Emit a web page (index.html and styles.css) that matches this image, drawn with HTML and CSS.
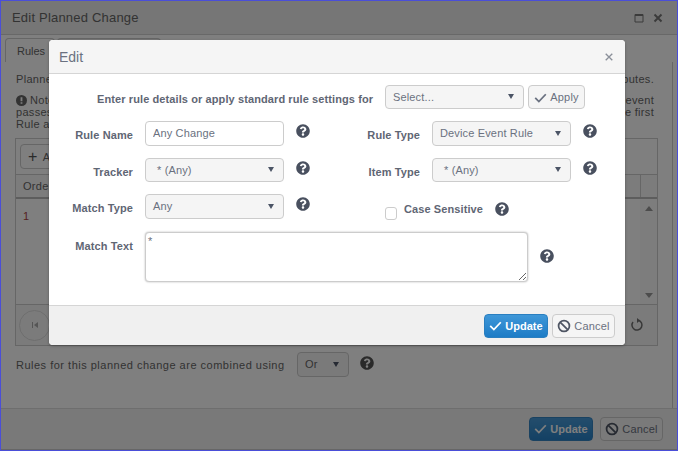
FILE: index.html
```html
<!DOCTYPE html>
<html lang="en">
<head>
    <meta charset="UTF-8">
    <title>Edit Planned Change</title>
    <link rel="stylesheet" href="styles.css">
</head>
<body>

<svg class="icon-defs" width="0" height="0">
    <symbol id="i-help" viewBox="0 0 512 512">
        <path d="M504 256c0 136.997-111.043 248-248 248S8 392.997 8 256C8 119.083 119.043 8 256 8s248 111.083 248 248zM262.655 90c-54.497 0-89.255 22.957-116.549 63.758-3.536 5.286-2.353 12.415 2.715 16.258l34.699 26.31c5.205 3.947 12.621 3.008 16.665-2.122 17.864-22.658 30.113-35.797 57.303-35.797 20.429 0 45.698 13.148 45.698 32.958 0 14.976-12.363 22.667-32.534 33.976C247.128 238.528 216 254.941 216 296v4c0 6.627 5.373 12 12 12h56c6.627 0 12-5.373 12-12v-1.333c0-28.462 83.186-29.647 83.186-106.667 0-58.002-60.165-102-116.531-102zM256 338c-25.365 0-46 20.635-46 46 0 25.364 20.635 46 46 46s46-20.636 46-46c0-25.365-20.635-46-46-46z"/>
    </symbol>
    <symbol id="i-check" viewBox="0 0 16 16">
        <path d="M1.5 8.5 6 13 14.5 4" fill="none" stroke="currentColor" stroke-width="2.2"/>
    </symbol>
    <symbol id="i-ban" viewBox="0 0 16 16">
        <circle cx="8" cy="8" r="6.2" fill="none" stroke="#4f5664" stroke-width="2"/>
        <path d="M3.8 3.8 12.2 12.2" stroke="#4f5664" stroke-width="2"/>
    </symbol>
</svg>

<!-- window behind the dialog -->
<div class="window">
    <div class="window-head">
        <span class="window-title">Edit Planned Change</span>
        <span class="window-tools">
            <svg width="10" height="10" viewBox="0 0 10 10"><path d="M1 1.5h8v7.5H1z" fill="none" stroke="currentColor"/><path d="M1 2h8" stroke="currentColor" stroke-width="2"/></svg>
            <svg width="10" height="10" viewBox="0 0 10 10"><path d="M1.5 1.5l7 7M8.5 1.5l-7 7" stroke="currentColor" stroke-width="2"/></svg>
        </span>
    </div>

    <div class="window-main">
        <div class="tabs">
            <div class="tab tab-active">Rules</div>
            <div class="tab tab-other"></div>
        </div>
        <div class="tab-panel">
            <div class="intro-line"><span>Planned</span><span>attributes.</span></div>
            <div class="note">
                <div class="intro-line"><span class="note-start"><svg width="11" height="11" viewBox="0 0 12 12"><circle cx="6" cy="6" r="6" fill="currentColor"/><path d="M6 2.5v4.2M6 8v1.6" stroke="#fff" stroke-width="2"/></svg>Note</span><span>event</span></div>
                <div class="intro-line"><span>passes</span><span>the first</span></div>
                <div class="intro-line"><span>Rule and</span></div>
            </div>

            <div class="grid-box">
                <div class="grid-toolbar"><span class="add-btn"><span class="add-plus">+</span> Add</span></div>
                <div class="grid-head"><span class="col-order">Order</span><span class="col-fill"></span><span class="col-scroll"></span></div>
                <div class="grid-body">
                    <div class="grid-cell">1</div>
                    <div class="scrollbar">
                        <span class="tri-up"></span>
                        <span class="tri-down"></span>
                    </div>
                </div>
                <div class="grid-pager">
                    <span class="pager-first"><svg width="8" height="8" viewBox="0 0 8 8"><path d="M1 1h1v6H1zM7 1v6L3 4z" fill="currentColor"/></svg></span>
                    <svg class="pager-refresh" width="14" height="14" viewBox="0 0 14 14"><path d="M8.5 2.3A5 5 0 1 1 3 4" fill="none" stroke="currentColor" stroke-width="1.5"/><path d="M7 0v5l3-2.5z" fill="currentColor"/></svg>
                </div>
            </div>

            <div class="combine-row">
                <span class="combine-text">Rules for this planned change are combined using</span>
                <span class="select select-small">Or</span>
                <svg class="help" width="14" height="14"><use href="#i-help"/></svg>
            </div>
        </div>
    </div>

    <div class="window-foot">
        <span class="btn btn-primary btn-update"><svg width="13" height="13"><use href="#i-check"/></svg>Update</span>
        <span class="btn btn-cancel"><svg width="14" height="14"><use href="#i-ban"/></svg>Cancel</span>
    </div>
</div>

<div class="backdrop"></div>

<!-- Edit dialog -->
<div class="modal">
    <div class="modal-head">
        <span class="modal-title">Edit</span>
        <svg class="modal-close" width="8" height="8" viewBox="0 0 9 9"><path d="M.8.8l7.4 7.4M8.2.8.8 8.2" stroke="currentColor" stroke-width="1.5"/></svg>
    </div>

    <form class="modal-body">
        <div class="apply-row">
            <label>Enter rule details or apply standard rule settings for</label>
            <span class="select select-apply">Select...</span>
            <span class="btn btn-apply"><svg width="13" height="13"><use href="#i-check"/></svg>Apply</span>
        </div>

        <div class="rule-grid">
            <label>Rule Name</label>
            <input class="field" type="text" value="Any Change">
            <svg class="help" width="14" height="14"><use href="#i-help"/></svg>
            <label>Rule Type</label>
            <span class="select">Device Event Rule</span>
            <svg class="help" width="14" height="14"><use href="#i-help"/></svg>

            <label>Tracker</label>
            <span class="select select-any">* (Any)</span>
            <svg class="help" width="14" height="14"><use href="#i-help"/></svg>
            <label>Item Type</label>
            <span class="select select-any">* (Any)</span>
            <svg class="help" width="14" height="14"><use href="#i-help"/></svg>

            <label>Match Type</label>
            <span class="select">Any</span>
            <svg class="help" width="14" height="14"><use href="#i-help"/></svg>
            <div class="case-cell">
                <span class="checkbox"></span>
                <label class="case-label">Case Sensitive</label>
                <svg class="help" width="14" height="14"><use href="#i-help"/></svg>
            </div>
        </div>

        <div class="text-row">
            <label>Match Text</label>
            <textarea class="field match-text">*</textarea>
            <svg class="help" width="14" height="14"><use href="#i-help"/></svg>
        </div>
    </form>

    <div class="modal-foot">
        <span class="btn btn-primary btn-update"><svg width="13" height="13"><use href="#i-check"/></svg>Update</span>
        <span class="btn btn-cancel"><svg width="14" height="14"><use href="#i-ban"/></svg>Cancel</span>
    </div>
</div>

</body>
</html>
```

FILE: styles.css
```css
* {
    box-sizing: border-box;
}
html, body {
    height: 100%;
}
body {
    margin: 0;
    overflow: hidden;
    font-family: "Liberation Sans", Arial, sans-serif;
    font-size: 11px;
    letter-spacing: 0.3px;
    color: #4c5566;
    background-color: #fff;
}
.icon-defs {
    position: absolute;
}
svg {
    flex: none;
    display: block;
}
.help {
    fill: #49505f;
}

/* window behind the dialog */
.window {
    height: 451px;
    display: flex;
    flex-direction: column;
    border: 1px solid #4a4ed8;
    color: #666;
    background-color: #fff;
}
.window-head {
    height: 34px;
    flex: none;
    display: flex;
    align-items: center;
    justify-content: space-between;
    padding: 0 14px 0 11px;
    background-color: #ececec;
    border-bottom: 1px solid #d0d0d0;
}
.window-title {
    font-size: 13px;
    letter-spacing: 0.2px;
}
.window-tools {
    display: flex;
    gap: 9px;
    color: #777;
}
.window-main {
    height: 373px;
    flex: none;
    margin-left: 3px;
    margin-right: 4px;
    padding-top: 3px;
}
.tabs {
    display: flex;
    gap: 2px;
    height: 24px;
    padding-left: 1px;
}
.tab {
    border: 1px solid #ccc;
    border-bottom: none;
    border-radius: 4px 4px 0 0;
    padding: 6px 11px 0;
    letter-spacing: 0;
}
.tab-active {
    width: 50px;
    background-color: #fff;
}
.tab-other {
    width: 104px;
    background-color: #f0f0f0;
}
.tab-panel {
    height: 346px;
    padding: 11px 14px 0 12px;
    background-color: #fff;
    border-right: 1px solid #ccc;
}
.intro-line {
    display: flex;
    justify-content: space-between;
    line-height: 12px;
    padding-right: 4px;
}
.note {
    margin-top: 9px;
}
.note-start {
    display: flex;
    align-items: center;
    gap: 3px;
}
.grid-box {
    margin: 8px 0 0 -1px;
    height: 208px;
    display: flex;
    flex-direction: column;
    border: 1px solid #ccc;
}
.grid-toolbar {
    height: 36px;
    flex: none;
    padding: 5px 4px;
    border-bottom: 1px solid #ccc;
}
.add-btn {
    display: flex;
    align-items: center;
    gap: 5px;
    width: 60px;
    height: 25px;
    padding: 0 7px;
    border: 1px solid #ccc;
    border-radius: 4px;
}
.add-plus {
    font-size: 16px;
    color: #555;
}
.grid-head {
    height: 24px;
    flex: none;
    display: flex;
    align-items: center;
    background-color: #f8f8f8;
    border-bottom: 2px solid #bbb;
}
.col-order {
    padding-left: 7px;
    width: 60px;
}
.col-fill {
    flex: 1;
    align-self: stretch;
}
.col-scroll {
    width: 17px;
    align-self: stretch;
    border-left: 1px solid #ccc;
}
.grid-body {
    flex: 1;
    min-height: 0;
    display: flex;
    justify-content: space-between;
    border-bottom: 1px solid #ccc;
}
.grid-cell {
    padding: 11px 7px;
    color: #a44;
}
.scrollbar {
    width: 17px;
    display: flex;
    flex-direction: column;
    justify-content: space-between;
    align-items: center;
    padding: 7px 0 6px;
    background-color: #fafafa;
}
.tri-up, .tri-down {
    width: 0;
    height: 0;
    border-left: 4px solid transparent;
    border-right: 4px solid transparent;
}
.tri-up {
    border-bottom: 5px solid #999;
}
.tri-down {
    border-top: 5px solid #999;
}
.grid-pager {
    flex: none;
    height: 40px;
    display: flex;
    align-items: center;
    justify-content: space-between;
    padding: 0 13px 0 3px;
    background-color: #f6f6f6;
}
.pager-first {
    width: 31px;
    height: 31px;
    border: 1px solid #ddd;
    border-radius: 50%;
    display: flex;
    align-items: center;
    justify-content: center;
    color: #aaa;
}
.pager-refresh {
    color: #707070;
}
.combine-row {
    margin-top: 6px;
    display: flex;
    align-items: center;
    height: 25px;
}
.combine-text {
    width: 281px;
    letter-spacing: 0.5px;
    white-space: nowrap;
}
.combine-row .select-small {
    width: 52px;
    height: 25px;
    color: #666;
}
.combine-row .help {
    margin: -3px 0 0 11px;
    fill: #555;
}
.window-foot {
    flex: 1;
    display: flex;
    justify-content: flex-end;
    align-items: center;
    gap: 7px;
    padding: 0 14px 1px 0;
    background-color: #f2f2f2;
    border-top: 1px solid #ddd;
    border-bottom: 1px solid #ccc;
}
.window-foot .btn-primary {
    opacity: 0.95;
}

.backdrop {
    position: absolute;
    inset: 1px;
    background-color: rgba(0, 0, 0, 0.5);
}

/* dialog */
.modal {
    position: absolute;
    left: 49px;
    top: 40px;
    width: 576px;
    height: 305px;
    display: flex;
    flex-direction: column;
    background-color: #fff;
    border-radius: 4px;
    box-shadow: 0 1px 3px rgba(0, 0, 0, 0.3);
}
.modal-head {
    height: 34px;
    flex: none;
    display: flex;
    align-items: center;
    justify-content: space-between;
    padding: 0 12px 0 10px;
    background-color: #f5f5f5;
    border-bottom: 1px solid #d5d5d5;
    border-radius: 4px 4px 0 0;
}
.modal-title {
    font-size: 14px;
    letter-spacing: 0;
    color: #6a7180;
}
.modal-close {
    color: #8a8f99;
}
.modal-body {
    flex: 1;
    padding-top: 11px;
}
label {
    text-align: right;
    font-weight: bold;
    letter-spacing: 0.1px;
    color: #5f6674;
}
.apply-row {
    display: flex;
    align-items: center;
    height: 24px;
    padding-left: 48px;
}
.apply-row label {
    width: 276px;
    margin-right: 12px;
    padding-top: 4px;
    white-space: nowrap;
}
.select, .field {
    display: block;
    border: 1px solid #ccc;
    border-radius: 4px;
    font-family: inherit;
    font-size: 11px;
    letter-spacing: 0.15px;
    color: #6a7180;
}
.select {
    position: relative;
    height: 100%;
    padding: 5px 7px;
    background-color: #f5f5f5;
    white-space: nowrap;
}
.select::after {
    content: "";
    position: absolute;
    right: 9px;
    top: 50%;
    margin-top: -3px;
    border-left: 3.5px solid transparent;
    border-right: 3.5px solid transparent;
    border-top: 5px solid #4c5566;
}
.select-apply {
    width: 139px;
}
.select-any {
    padding-left: 11px;
}
.btn {
    display: inline-flex;
    align-items: center;
    justify-content: center;
    gap: 3px;
    height: 24px;
    padding: 0 4px;
    border: 1px solid #ccc;
    border-radius: 4px;
    background-color: #f5f5f5;
    color: #6a7180;
    font-size: 11px;
    letter-spacing: 0.2px;
}
.btn-apply {
    width: 57px;
    margin-left: 4px;
}
.btn-primary {
    background: linear-gradient(#3f97d8, #1d7cc6);
    border-color: #2a7fc0;
    color: #fff;
    font-weight: bold;
    letter-spacing: 0;
}
.rule-grid {
    display: grid;
    grid-template-columns: 84px 139px 14px 98px 139px 14px;
    grid-template-rows: 25px 24px 25px;
    column-gap: 12px;
    row-gap: 12px;
    margin-top: 12px;
}
.rule-grid label {
    padding-top: 8px;
}
.rule-grid .help {
    margin-top: 3px;
}
.field {
    width: 100%;
    height: 100%;
    padding: 3px 7px 5px;
    background-color: #fff;
    outline: none;
}
.case-cell {
    grid-column: 4 / 7;
    display: flex;
    align-items: flex-start;
    padding-left: 63px;
}
.checkbox {
    width: 12px;
    height: 13px;
    margin-top: 13px;
    border: 1px solid #ccc;
    border-radius: 3px;
    background-color: #fff;
}
.rule-grid .case-label {
    margin-left: 7px;
    padding-top: 9px;
}
.rule-grid .case-cell .help {
    margin: 8px 0 0 12px;
}
.text-row {
    display: grid;
    grid-template-columns: 84px 383px 14px;
    column-gap: 12px;
    margin-top: 13px;
}
.text-row label {
    padding-top: 8px;
}
.match-text {
    height: 50px;
    padding: 2px;
    box-shadow: 0 0 2px rgba(0, 0, 0, 0.3);
}
.text-row .help {
    margin-top: 17px;
}
.modal-foot {
    height: 40px;
    flex: none;
    display: flex;
    justify-content: flex-end;
    align-items: center;
    gap: 4px;
    padding-right: 10px;
    background-color: #f0f0f0;
    border-top: 1px solid #d5d5d5;
    border-radius: 0 0 4px 4px;
}
.window-foot .btn-update {
    width: 64px;
}
.btn-update {
    width: 64px;
}
.btn-cancel {
    width: 63px;
}
```
